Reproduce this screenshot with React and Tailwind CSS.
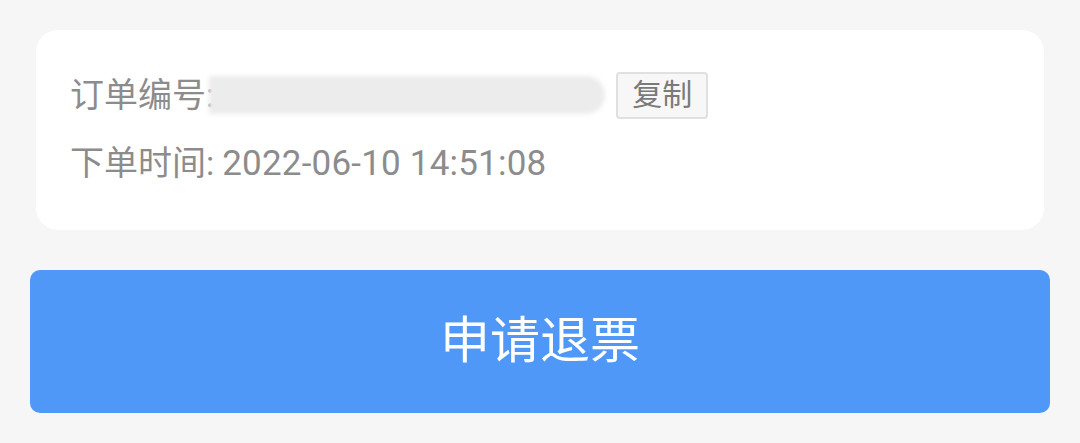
export default function App() {
  return (
    <div
      className="flex h-[443px] w-[1080px] flex-col overflow-hidden bg-[#f6f6f6]"
      style={{ fontFamily: "Roboto, 'Noto Sans CJK SC', sans-serif" }}
    >
      <div className="mx-[36px] mt-[30px] flex h-[200px] flex-col rounded-[22px] bg-white px-[34px] pt-[41px] text-[34px] leading-none text-[#8c8c8c]">
        <div className="flex h-[48px] items-center">
          <span>订单编号:</span>
          {/* masked order number */}
          <div className="-ml-[5px] h-[38px] w-[396px] rounded-r-[22px] bg-[#ececec] blur-[2px]" />
          <button className="ml-[11px] flex h-[47px] w-[92px] items-center justify-center rounded-[4px] border-2 border-[#e0e0e0] bg-[#f7f7f7] text-[30px] text-[#7a7a7a]">
            复制
          </button>
        </div>
        <div className="mt-[20px] flex h-[48px] items-center">
          下单时间:<span className="ml-[8px] text-[35px] tracking-[0.2px]">2022-06-10 14:51:08</span>
        </div>
      </div>

      <button className="mx-[30px] mt-[40px] flex h-[143px] items-center justify-center rounded-[10px] bg-[#4f98f7] text-[50px] text-white">
        申请退票
      </button>
    </div>
  )
}
